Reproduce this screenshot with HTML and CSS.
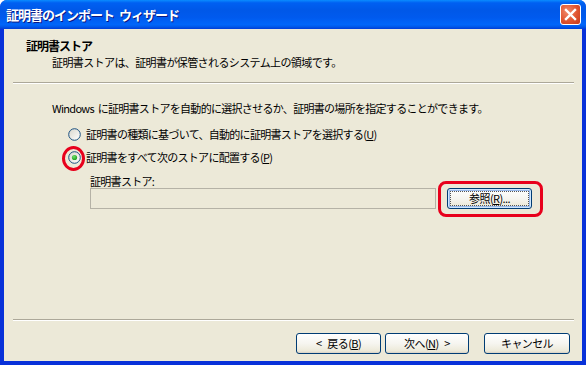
FILE: index.html
```html
<!DOCTYPE html>
<html lang="ja">
<head>
<meta charset="utf-8">
<title>証明書のインポート ウィザード</title>
<link rel="stylesheet" href="styles.css">
</head>
<body>
<div class="window">
  <div class="titlebar">
    <span class="title">証明書のインポート ウィザード</span>
    <span class="close">
      <svg width="13" height="13" viewBox="0 0 13 13"><path d="M2 2 L11 11 M11 2 L2 11" stroke="#fff" stroke-width="2.4" stroke-linecap="square"/></svg>
    </span>
  </div>
  <div class="client">
    <div class="header">
      <div class="h-title">証明書ストア</div>
      <div class="h-sub">証明書ストアは、証明書が保管されるシステム上の領域です。</div>
    </div>
    <div class="sep"></div>
    <div class="body">
      <p class="intro">Windows に証明書ストアを自動的に選択させるか、証明書の場所を指定することができます。</p>
      <div class="radio-row">
        <svg class="radio" width="13" height="13" viewBox="0 0 13 13">
          <defs><linearGradient id="rg1" x1="0" y1="0" x2="1" y2="1"><stop offset="0" stop-color="#d8d6cc"/><stop offset="1" stop-color="#ffffff"/></linearGradient></defs>
          <circle cx="6.5" cy="6.5" r="5.8" fill="url(#rg1)" stroke="#1c5180" stroke-width="1"/>
        </svg>
        <span>証明書の種類に基づいて、自動的に証明書ストアを選択する(<u>U</u>)</span>
      </div>
      <div class="radio-row second">
        <svg class="radio" width="13" height="13" viewBox="0 0 13 13">
          <defs>
            <linearGradient id="rg2" x1="0" y1="0" x2="1" y2="1"><stop offset="0" stop-color="#d8d6cc"/><stop offset="1" stop-color="#ffffff"/></linearGradient>
            <radialGradient id="dot" cx="0.4" cy="0.35" r="0.7"><stop offset="0" stop-color="#6fe06a"/><stop offset="1" stop-color="#1a9a1a"/></radialGradient>
          </defs>
          <circle cx="6.5" cy="6.5" r="5.8" fill="url(#rg2)" stroke="#1c5180" stroke-width="1"/>
          <circle cx="6.5" cy="6.5" r="2.6" fill="url(#dot)"/>
        </svg>
        <span>証明書をすべて次のストアに配置する(<u>P</u>)</span>
      </div>
      <div class="store">
        <div class="store-label">証明書ストア:</div>
        <div class="store-row">
          <div class="field"></div>
          <button class="btn default"><span class="focus">参照(<u>R</u>)...</span></button>
        </div>
      </div>
    </div>
    <div class="sep bottom"></div>
    <div class="footer">
      <button class="btn back">&lt; 戻る(<u>B</u>)</button>
      <button class="btn next">次へ(<u>N</u>) &gt;</button>
      <button class="btn cancel">キャンセル</button>
    </div>
  </div>
  <div class="mark mark-radio"></div>
  <div class="mark mark-btn"></div>
</div>
</body>
</html>
```
FILE: styles.css
```css
* { box-sizing: border-box; }
html, body { margin: 0; padding: 0; background: #ffffff; }
body {
  font-family: "Noto Sans CJK JP", "Noto Sans", sans-serif;
  font-size: 11px;
  color: #000;
}
.window {
  position: relative;
  width: 586px;
  height: 365px;
  display: flex;
  flex-direction: column;
  background: #0831d9;
  border-radius: 7px 7px 0 0;
  overflow: hidden;
}
.titlebar {
  height: 29px;
  flex: none;
  display: flex;
  align-items: center;
  justify-content: space-between;
  padding: 0 5px 0 6px;
  background: linear-gradient(to bottom, #0a8cff 0%, #0060f2 10%, #0058e8 35%, #005aee 60%, #0066fa 85%, #0059ea 92%, #003dd7 100%);
}
.title {
  color: #fff;
  font-weight: bold;
  font-size: 13px;
  letter-spacing: -1px;
  word-spacing: 3px;
  text-shadow: 1px 1px 0 #0a1883;
  line-height: 16px;
  margin-top: 1px;
}
.close {
  width: 21px;
  height: 21px;
  border: 1px solid #fff;
  border-radius: 3px;
  background: radial-gradient(circle at 35% 35%, #f08a6c 0%, #e0542f 55%, #c5381a 100%);
  display: flex;
  align-items: center;
  justify-content: center;
}
.client {
  flex: 1;
  margin: 0 4px 4px 4px;
  background: #ece9d8;
  display: flex;
  flex-direction: column;
}
.header {
  height: 53px;
  flex: none;
  padding: 10px 0 0 22px;
  letter-spacing: -0.6px;
}
.h-title {
  font-weight: bold;
  font-size: 12px;
  letter-spacing: -1px;
  line-height: 14px;
}
.h-sub {
  line-height: 14px;
  margin-top: 2px;
  padding-left: 26px;
}
.sep {
  height: 2px;
  flex: none;
  border-top: 1px solid #aca899;
  border-bottom: 1px solid #ffffff;
  margin: 0 8px 0 9px;
}
.body {
  flex: 1;
  padding-top: 17px;
  letter-spacing: -0.7px;
}
.intro {
  margin: 0;
  padding-left: 48px;
  line-height: 14px;
  word-spacing: 2px;
}
.radio-row {
  display: flex;
  align-items: center;
  gap: 5px;
  padding-left: 64px;
  height: 14px;
  margin-top: 12px;
  line-height: 14px;
}
.radio-row.second { margin-top: 9px; }
.radio { flex: none; }
.store {
  padding-left: 86px;
  margin-top: 10px;
}
.store-label { line-height: 14px; }
.store-row {
  display: flex;
  align-items: flex-start;
  gap: 11px;
}
.field {
  width: 346px;
  height: 21px;
  border: 1px solid #b5b2a6;
  background: #ece9d8;
}
.btn {
  font-family: inherit;
  font-size: 11px;
  letter-spacing: -0.6px;
  word-spacing: 4px;
  height: 21px;
  padding: 0;
  border: 1px solid #003c74;
  border-radius: 3px;
  background: linear-gradient(to bottom, #ffffff 0%, #f6f5f0 50%, #ece9d8 90%, #d6d0c5 100%);
  color: #000;
  line-height: 17px;
  display: flex;
  align-items: center;
  justify-content: center;
}
.btn.default {
  width: 85px;
  box-shadow: inset 0 0 0 1px #cee7ff, inset 0 0 0 2px #98b8ea;
  padding: 2px;
}
.focus {
  flex: 1;
  align-self: stretch;
  border: 1px dotted #555;
  display: flex;
  align-items: center;
  justify-content: center;
}
.footer {
  height: 40px;
  flex: none;
  display: flex;
  justify-content: flex-end;
  align-items: flex-start;
  padding: 12px 12px 0 0;
}
.back { width: 85px; }
.next { width: 84px; margin-left: 4px; }
.cancel { width: 86px; margin-left: 15px; }
.mark {
  position: absolute;
  border: 3px solid #e8001c;
  pointer-events: none;
}
.mark-radio {
  left: 62px;
  top: 146px;
  width: 23px;
  height: 25px;
  border-radius: 50%;
}
.mark-btn {
  left: 438px;
  top: 181px;
  width: 105px;
  height: 36px;
  border-radius: 8px;
}
```
